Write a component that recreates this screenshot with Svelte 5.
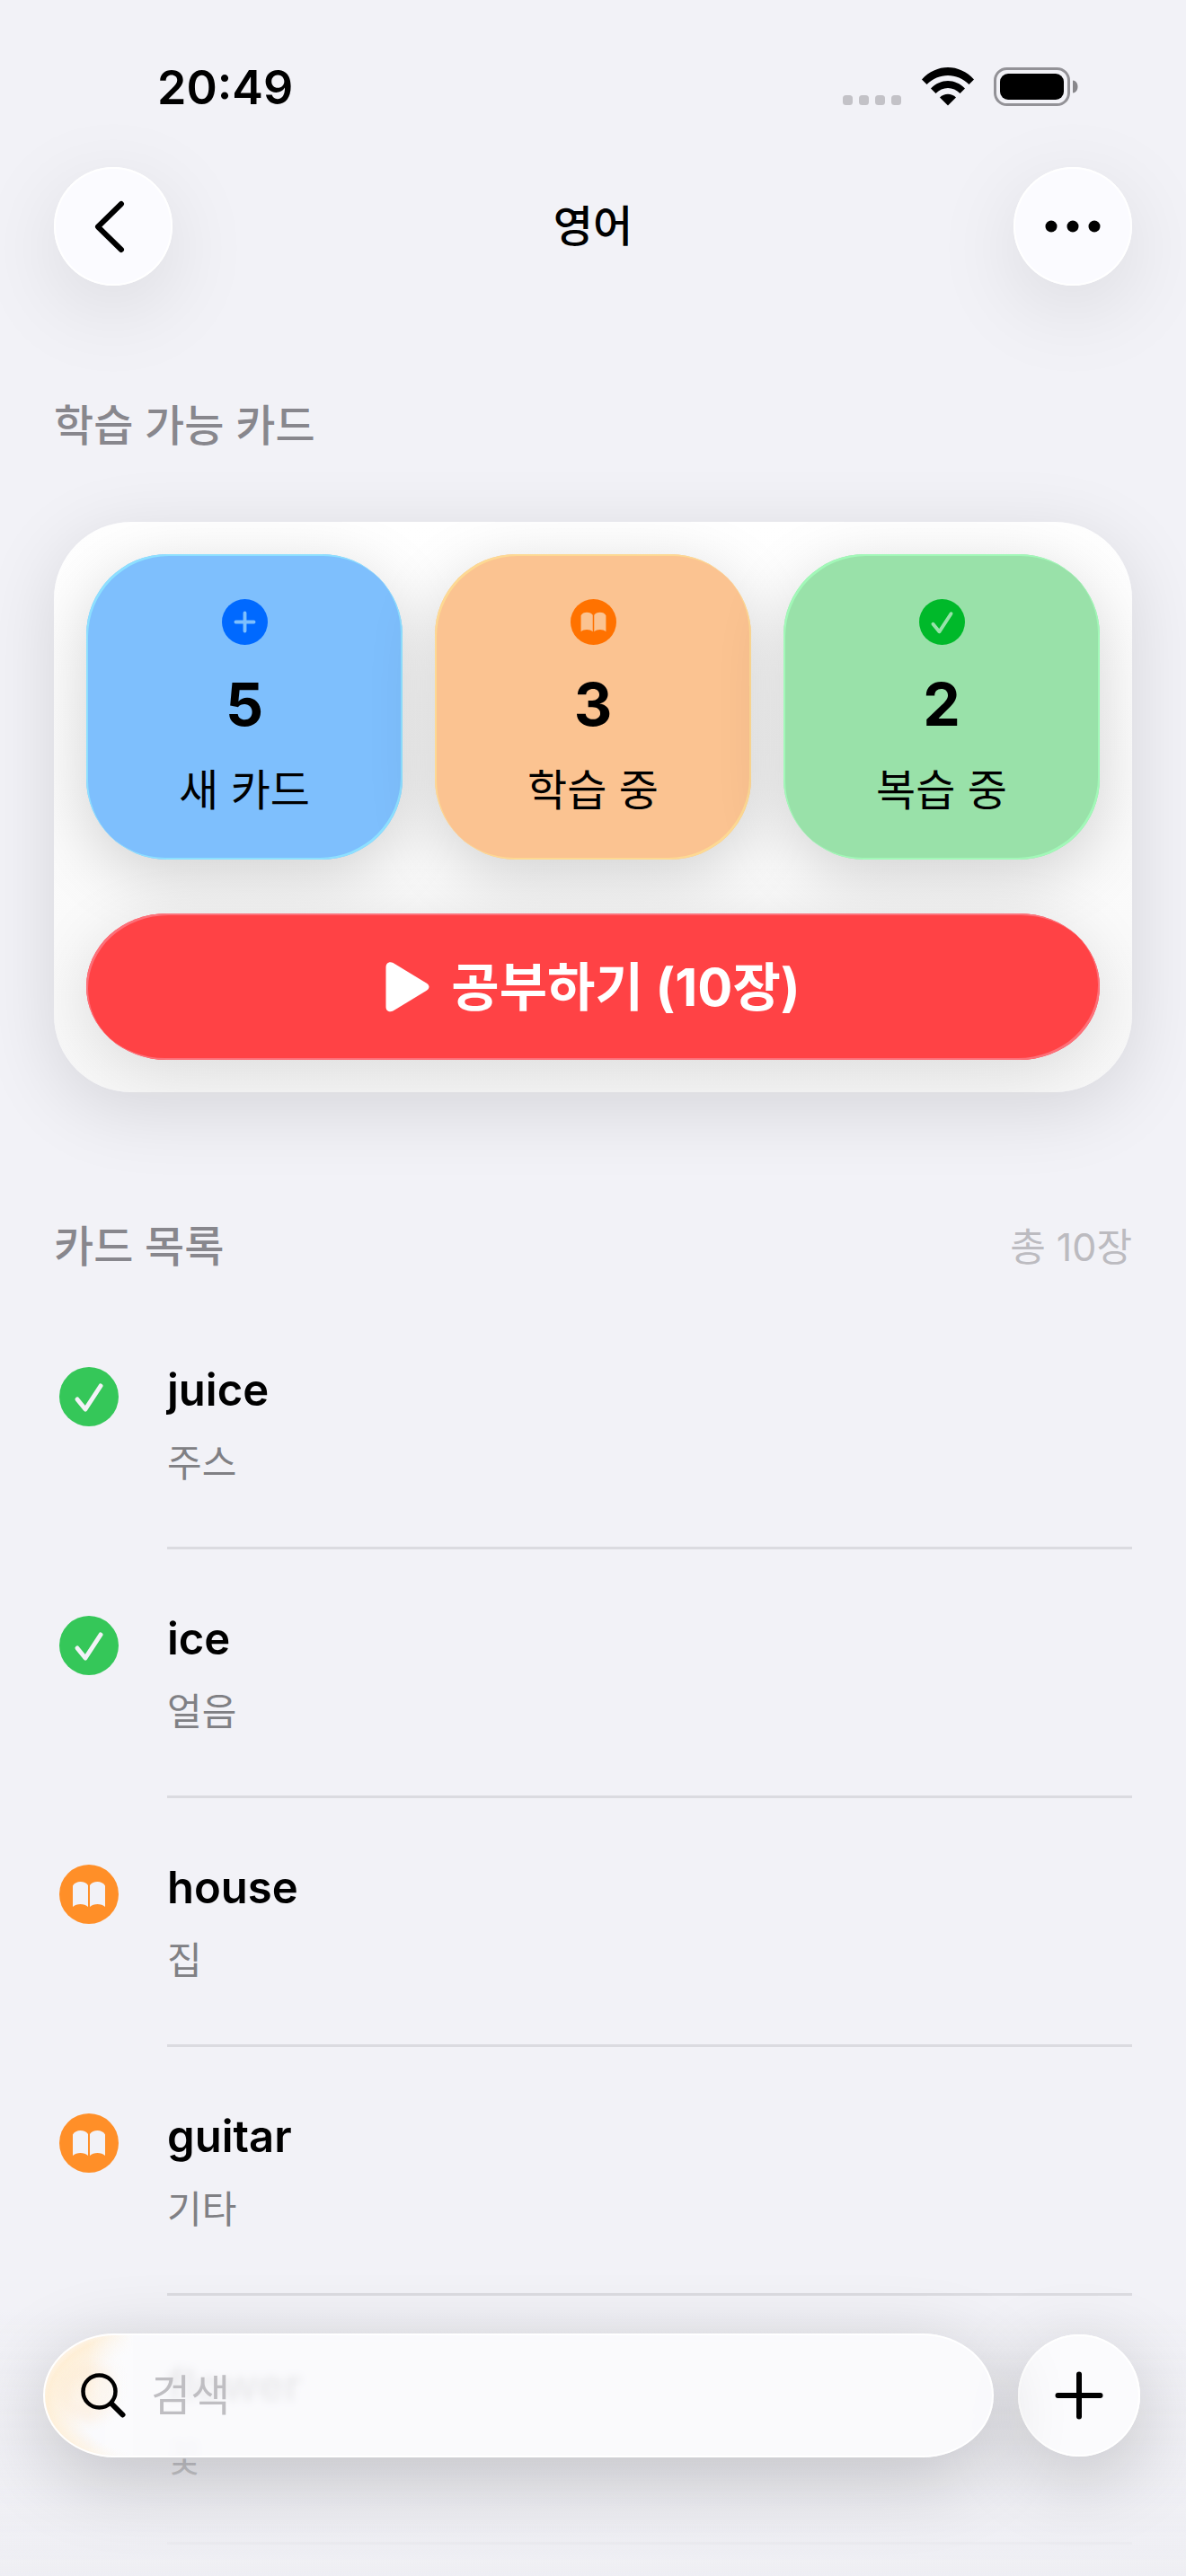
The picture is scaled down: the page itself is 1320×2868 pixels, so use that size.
<script>
  const tiles = [
    { kind: 'new', icon: 'plus', count: 5, label: '새 카드' },
    { kind: 'learning', icon: 'book', count: 3, label: '학습 중' },
    { kind: 'review', icon: 'check', count: 2, label: '복습 중' }
  ];

  const cards = [
    { word: 'juice', meaning: '주스', icon: 'check' },
    { word: 'ice', meaning: '얼음', icon: 'check' },
    { word: 'house', meaning: '집', icon: 'book' },
    { word: 'guitar', meaning: '기타', icon: 'book' },
    { word: 'flower', meaning: '꽃', icon: 'book' }
  ];

  let query = $state('');
</script>

{#snippet badge(icon, cls)}
  <svg class={cls} viewBox="0 0 66 66" aria-hidden="true">
    <circle class="disc" cx="33" cy="33" r="33" />
    {#if icon === 'plus'}
      <path class="mark" d="M33 20v26M20 33h26" />
    {:else if icon === 'check'}
      <path class="mark" d="M20 36l9 11L46 21" />
    {:else}
      <path
        class="page"
        d="M32 23c-1.500-2.700-5-4-8.500-4s-7 1.500-8.500 4.500V47c4-4 13-4 17 0zM34 23c1.500-2.700 5-4 8.500-4s7 1.500 8.500 4.500V47c-4-4-13-4-17 0z"
      />
    {/if}
  </svg>
{/snippet}

<div class="screen">
  <div class="status">
    <span class="time">20:49</span>
    <div class="indicators">
      <svg class="cell" viewBox="0 0 66 12" aria-hidden="true">
        <rect x="0" y="0" width="11" height="11" rx="3.500" />
        <rect x="18" y="0" width="11" height="11" rx="3.500" />
        <rect x="36" y="0" width="11" height="11" rx="3.500" />
        <rect x="54" y="0" width="11" height="11" rx="3.500" />
      </svg>
      <svg class="wifi" viewBox="0 0 58 43" aria-hidden="true">
        <path d="M0 13.500C16-4.500 42-4.500 58 13.500L52.500 19C39.500 5.500 18.500 5.500 5.500 19z" />
        <path d="M10 23.500C21 12 37 12 48 23.500L42.500 29C35 21 23 21 15.500 29z" />
        <path d="M20 33.500C25 28.500 33 28.500 38 33.500L29 42.500z" />
      </svg>
      <svg class="battery" viewBox="0 0 94 43" aria-hidden="true">
        <rect class="shell" x="1.500" y="1.500" width="82" height="40" rx="13" />
        <rect x="7" y="7" width="71" height="29" rx="9" />
        <path class="tip" d="M88 14.500c3 0 5.500 3 5.500 7s-2.500 7-5.500 7z" />
      </svg>
    </div>
  </div>

  <header class="nav">
    <button class="round" aria-label="뒤로">
      <svg viewBox="0 0 132 132" aria-hidden="true"><path d="M75 41L49 66.500L75 92" /></svg>
    </button>
    <h1>영어</h1>
    <button class="round" aria-label="더 보기">
      <svg class="dots" viewBox="0 0 132 132" aria-hidden="true">
        <circle cx="42" cy="66" r="6.500" /><circle cx="66" cy="66" r="6.500" /><circle cx="90" cy="66" r="6.500" />
      </svg>
    </button>
  </header>

  <main>
    <section class="study">
      <h2>학습 가능 카드</h2>
      <div class="panel">
        <div class="tiles">
          {#each tiles as tile}
            <div class="tile {tile.kind}">
              {@render badge(tile.icon, 'tile-icon')}
              <strong>{tile.count}</strong>
              <span>{tile.label}</span>
            </div>
          {/each}
        </div>
        <button class="start">
          <svg viewBox="0 0 48 56" aria-hidden="true">
            <path d="M0 6C0 1 4 -1 8 1L45 23.500C49 26 49 29.500 45 32L8 54.500C4 56.500 0 54.500 0 50z" />
          </svg>
          <span>공부하기 (10장)</span>
        </button>
      </div>
    </section>

    <section class="list">
      <div class="list-head">
        <h2>카드 목록</h2>
        <span class="total">총 10장</span>
      </div>
      <ul>
        {#each cards as card}
          <li class={card.icon}>
            {@render badge(card.icon, 'row-icon')}
            <div class="entry">
              <span class="word">{card.word}</span>
              <span class="meaning">{card.meaning}</span>
            </div>
          </li>
        {/each}
      </ul>
    </section>
  </main>

  <div class="haze"></div>

  <footer class="toolbar">
    <label class="search">
      <svg viewBox="0 0 50 50" aria-hidden="true">
        <circle cx="20.500" cy="20.500" r="18" />
        <path d="M34 34L46.500 46.500" />
      </svg>
      <input type="search" placeholder="검색" aria-label="검색" bind:value={query} />
    </label>
    <button class="add" aria-label="카드 추가">
      <svg viewBox="0 0 54 54" aria-hidden="true"><path d="M27 3.500v47M3.500 27h47" /></svg>
    </button>
  </footer>
</div>

<style>
  :global(body) {
    margin: 0;
    background: #f2f2f7;
  }

  .screen {
    min-height: 100vh;
    overflow: hidden;
    box-sizing: border-box;
    background: #f2f2f7;
    color: #000;
    font-family: Inter, 'Noto Sans CJK KR', sans-serif;
  }

  button,
  input {
    font: inherit;
    color: inherit;
    border: 0;
    padding: 0;
    background: none;
  }

  h1,
  h2 {
    margin: 0;
    font-size: 48px;
    line-height: 60px;
    font-weight: 500;
  }

  h2 {
    color: #88878d;
  }

  /* Status bar */
  .status {
    display: flex;
    align-items: center;
    justify-content: space-between;
    height: 60px;
    padding: 66px 120px 0 175px;
  }

  .time {
    padding-top: 4px;
    font-size: 52px;
    line-height: 60px;
    font-weight: 600;
  }

  .indicators {
    display: flex;
    align-items: flex-end;
  }

  .cell {
    width: 66px;
    height: 12px;
    margin-right: 22px;
    fill: #c3c2c7;
  }

  .wifi {
    width: 58px;
    height: 43px;
    margin-right: 22px;
  }

  .battery {
    width: 94px;
    height: 43px;
  }

  .shell {
    fill: none;
    stroke: #939297;
    stroke-width: 3;
  }

  .tip {
    fill: #88878b;
  }

  /* Navigation */
  .nav {
    display: flex;
    align-items: center;
    justify-content: space-between;
    padding: 60px 60px 0;
  }

  .round {
    width: 132px;
    height: 132px;
    border-radius: 50%;
    background: #fbfbff;
    box-shadow:
      inset 0 0 0 2px #fff,
      0 24px 96px rgba(0, 0, 0, 0.1);
  }

  .round svg {
    display: block;
    width: 132px;
    height: 132px;
    fill: none;
    stroke: #000;
    stroke-width: 6;
    stroke-linecap: round;
    stroke-linejoin: round;
  }

  .round .dots {
    fill: #000;
    stroke: none;
  }

  main {
    padding: 126px 60px 0;
  }

  /* Study panel */
  .panel {
    display: flex;
    flex-direction: column;
    gap: 60px;
    margin-top: 77px;
    padding: 36px;
    overflow: hidden;
    border-radius: 86px;
    background: linear-gradient(#fff, #f8f8f8);
    box-shadow: 0 18px 84px rgba(0, 0, 10, 0.12);
  }

  .tiles {
    display: grid;
    grid-template-columns: repeat(3, 1fr);
    gap: 36px;
  }

  .tile {
    display: flex;
    flex-direction: column;
    align-items: center;
    padding: 50px 12px 47px;
    border-radius: 90px;
    background: var(--fill);
    box-shadow:
      inset 2px 2px 0 var(--rim),
      inset -2px -2px 0 var(--rim),
      0 18px 72px rgba(0, 0, 0, 0.17);
  }

  .tile-icon {
    width: 51px;
    height: 51px;
  }

  .tile strong {
    margin-top: 27px;
    font-size: 66px;
    line-height: 78px;
    font-weight: 700;
  }

  .tile span {
    margin-top: 27px;
    font-size: 48px;
    line-height: 60px;
  }

  .disc {
    fill: var(--tint);
  }

  .mark {
    fill: none;
    stroke: var(--ink);
    stroke-width: 5;
    stroke-linecap: round;
    stroke-linejoin: round;
  }

  .page {
    fill: var(--ink);
  }

  .new {
    --tint: #0069ff;
    --ink: #7dbffd;
    --fill: #7ebffd;
    --rim: #8de0ff;
  }

  .learning {
    --tint: #ff7200;
    --ink: #fbc391;
    --fill: #fbc391;
    --rim: #fdd993;
  }

  .review {
    --tint: #00b92a;
    --ink: #98e2aa;
    --fill: #99e1a9;
    --rim: #a2f8b8;
  }

  .start {
    display: flex;
    align-items: center;
    justify-content: center;
    gap: 24px;
    height: 163px;
    border-radius: 90px / 82px;
    background: #ff4245;
    color: #fff;
    font-size: 58px;
    line-height: 66px;
    font-weight: 700;
    box-shadow:
      inset 2px 2px 0 #fd7079,
      inset -2px -2px 0 #fd7079,
      0 14px 72px rgba(0, 0, 0, 0.12);
  }

  .start svg {
    width: 49px;
    height: 56px;
    fill: #fff;
  }

  /* Card list */
  .list-head {
    display: flex;
    align-items: center;
    justify-content: space-between;
    margin-top: 142px;
  }

  .total {
    font-size: 43px;
    line-height: 60px;
    color: #bcbbc0;
  }

  ul {
    list-style: none;
    margin: 30px 0 0;
    padding: 0;
  }

  li {
    display: flex;
    gap: 54px;
    padding-left: 6px;
  }

  li.check {
    --tint: #35c759;
    --ink: #f2f2f7;
  }

  li.book {
    --tint: #ff8f28;
    --ink: #f2f2f7;
  }

  .row-icon {
    width: 66px;
    height: 66px;
    margin-top: 74px;
  }

  .entry {
    flex: 1;
    display: flex;
    flex-direction: column;
    gap: 24px;
    padding: 70px 0 66px;
    border-bottom: 3px solid #dbdbe0;
  }

  .word {
    font-size: 49px;
    line-height: 60px;
    font-weight: 600;
  }

  .meaning {
    font-size: 42px;
    line-height: 54px;
    color: #808084;
  }

  /* Floating toolbar */
  .haze {
    position: fixed;
    left: 0;
    right: 0;
    bottom: 0;
    height: 300px;
    background: linear-gradient(
      rgba(238, 238, 243, 0),
      rgba(238, 238, 243, 0.55) 50%,
      rgba(238, 238, 243, 0.8) 85%,
      rgba(238, 238, 243, 0.9)
    );
    pointer-events: none;
  }

  .toolbar {
    position: fixed;
    left: 48px;
    right: 51px;
    bottom: 132px;
    display: flex;
    align-items: center;
    gap: 27px;
  }

  .search {
    flex: 1;
    display: flex;
    align-items: center;
    gap: 28px;
    height: 138px;
    padding: 0 48px 0 42px;
    box-sizing: border-box;
    border-radius: 80px / 69px;
    background:
      linear-gradient(90deg, rgba(251, 251, 253, 0) 50%, #fbfbfd) 0 0 / 100px 100% no-repeat,
      radial-gradient(ellipse 120px 90px at 110px 78px, rgba(255, 236, 206, 0) 60%, rgba(255, 236, 206, 0.8) 88%, rgba(255, 244, 234, 0.7)) 0 0 / 100px 100% no-repeat,
      radial-gradient(circle 52px at 48px 58px, rgba(255, 236, 206, 0.6), rgba(255, 240, 220, 0)) 0 0 / 100px 100% no-repeat,
      rgba(251, 251, 253, 0.9);
    backdrop-filter: blur(5px);
    box-shadow:
      inset 0 0 0 2px #fff,
      0 22px 90px rgba(0, 0, 0, 0.2);
  }

  .search svg {
    width: 50px;
    height: 50px;
    fill: none;
    stroke: #000;
    stroke-width: 4.500;
    stroke-linecap: round;
  }

  .search path {
    stroke-width: 6;
  }

  input {
    flex: 1;
    min-width: 0;
    font-size: 48px;
    line-height: 60px;
    outline: 0;
    appearance: none;
  }

  input::placeholder {
    color: #bfbec2;
    opacity: 1;
  }

  .add {
    display: flex;
    align-items: center;
    justify-content: center;
    width: 136px;
    height: 136px;
    border-radius: 50%;
    background: #fbfbfd;
    box-shadow:
      inset 0 0 0 2px #fff,
      0 22px 90px rgba(0, 0, 0, 0.2);
  }

  .add svg {
    width: 54px;
    height: 54px;
    fill: none;
    stroke: #000;
    stroke-width: 6;
    stroke-linecap: round;
  }
</style>
